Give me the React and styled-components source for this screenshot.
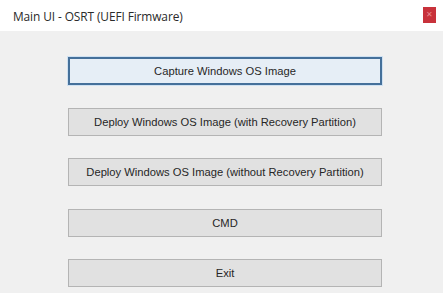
import React from "react";
import styled, { createGlobalStyle } from "styled-components";

const Global = createGlobalStyle`
  html, body { margin: 0; padding: 0; background: #f0f0f0; }
  * { box-sizing: border-box; }
`;

const Window = styled.div`
  width: 443px;
  height: 293px;
  display: flex;
  flex-direction: column;
  background: #f0f0f0;
  overflow: hidden;
`;

const TitleBar = styled.div`
  height: 31px;
  flex: none;
  background: #ffffff;
  display: flex;
  align-items: center;
  justify-content: space-between;
  padding: 0 7px 0 13px;
`;

const Title = styled.span`
  font-family: "Open Sans", "Noto Sans", sans-serif;
  font-size: 11.9px;
  color: #2a2a2a;
  letter-spacing: -0.1px;
  margin-top: 1px;
`;

const CloseButton = styled.div`
  width: 13px;
  height: 16px;
  margin-top: -1px;
  background: #c8323b;
  display: flex;
  align-items: center;
  justify-content: center;
  color: #e88a90;
  font-family: "Liberation Sans", sans-serif;
  font-size: 8px;
  line-height: 1;
`;

const Content = styled.div`
  flex: 1;
  display: flex;
  flex-direction: column;
  gap: 22.5px;
  padding: 26px 0 0 68px;
`;

const Button = styled.div`
  width: 314px;
  height: 28px;
  display: flex;
  align-items: center;
  justify-content: center;
  font-family: "Liberation Sans", Arial, sans-serif;
  font-size: 11.2px;
  color: #262626;
  background: ${(p) => (p.$focused ? "#e6eef6" : "#e1e1e1")};
  border: ${(p) => (p.$focused ? "2px solid #45709a" : "1px solid #b4b4b4")};
  box-shadow: ${(p) => (p.$focused ? "0 0 0 1px #cfe1f2" : "none")};
`;

const items = [
  "Capture Windows OS Image",
  "Deploy Windows OS Image (with Recovery Partition)",
  "Deploy Windows OS Image (without Recovery Partition)",
  "CMD",
  "Exit",
];

export default function App() {
  return (
    <>
      <Global />
      <Window>
        <TitleBar>
          <Title>Main UI - OSRT (UEFI Firmware)</Title>
          <CloseButton>✕</CloseButton>
        </TitleBar>
        <Content>
          {items.map((t, i) => (
            <Button key={t} $focused={i === 0}>
              {t}
            </Button>
          ))}
        </Content>
      </Window>
    </>
  );
}
